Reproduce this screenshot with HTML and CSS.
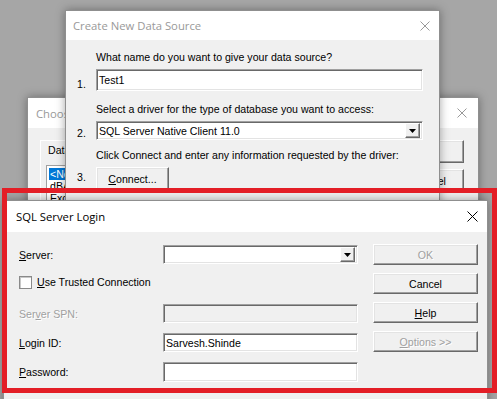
FILE: index.html
```html
<!DOCTYPE html>
<html>
<head>
    <title>SQL Server Login</title>
    <link rel="stylesheet" href="styles.css">
</head>
<body>
    <div class="desktop">

        <!-- Choose Data Source (behind) -->
        <div class="window choose">
            <div class="title-bar inactive">
                <span class="title">Choose Data Source</span>
                <svg class="close-x" width="10" height="10" viewBox="0 0 10 10"><path d="M0.5 0.5L9.5 9.5M9.5 0.5L0.5 9.5" stroke="currentColor" stroke-width="1"/></svg>
            </div>
            <div class="choose-body">
                <div class="tab-frame">
                    <div class="column-head">Data Source Name</div>
                    <div class="list-box">
                        <div class="list-item selected">&lt;New&gt;</div>
                        <div class="list-item">dBASE</div>
                        <div class="list-item">Excel</div>
                    </div>
                </div>
                <div class="button-column">
                    <div class="btn wide">OK</div>
                    <div class="btn wide">Cancel</div>
                </div>
            </div>
        </div>

        <!-- Create New Data Source -->
        <div class="window create">
            <div class="title-bar inactive">
                <span class="title">Create New Data Source</span>
                <svg class="close-x" width="10" height="10" viewBox="0 0 10 10"><path d="M0.5 0.5L9.5 9.5M9.5 0.5L0.5 9.5" stroke="currentColor" stroke-width="1"/></svg>
            </div>
            <div class="create-body">
                <div class="prompt">What name do you want to give your data source?</div>
                <div class="step">1.</div>
                <div class="field tall">Test1</div>

                <div class="prompt">Select a driver for the type of database you want to access:</div>
                <div class="step">2.</div>
                <div class="field combo">
                    <span>SQL Server Native Client 11.0</span>
                    <span class="drop-btn"><svg width="7" height="4" viewBox="0 0 7 4"><path d="M0 0H7L3.5 4Z" fill="#000"/></svg></span>
                </div>

                <div class="prompt">Click Connect and enter any information requested by the driver:</div>
                <div class="step">3.</div>
                <div class="btn connect"><span><u>C</u>onnect...</span></div>
            </div>
        </div>

        <!-- SQL Server Login -->
        <div class="window login">
            <div class="title-bar">
                <span class="title">SQL Server Login</span>
                <svg class="close-x" width="11" height="11" viewBox="0 0 11 11"><path d="M0.5 0.5L10.5 10.5M10.5 0.5L0.5 10.5" stroke="currentColor" stroke-width="1"/></svg>
            </div>
            <div class="login-body">
                <div class="login-form">
                    <div class="form-row">
                        <label><u>S</u>erver:</label>
                        <div class="field combo">
                            <span></span>
                            <span class="drop-btn"><svg width="7" height="4" viewBox="0 0 7 4"><path d="M0 0H7L3.5 4Z" fill="#000"/></svg></span>
                        </div>
                    </div>
                    <div class="check-row">
                        <span class="check-box"></span>
                        <span><u>U</u>se Trusted Connection</span>
                    </div>
                    <div class="form-row spaced">
                        <label class="disabled">Ser<u>v</u>er SPN:</label>
                        <div class="field off"></div>
                    </div>
                    <div class="form-row">
                        <label><u>L</u>ogin ID:</label>
                        <div class="field">Sarvesh.Shinde</div>
                    </div>
                    <div class="form-row">
                        <label><u>P</u>assword:</label>
                        <div class="field pass"></div>
                    </div>
                </div>
                <div class="login-buttons">
                    <div class="btn disabled">OK</div>
                    <div class="btn">Cancel</div>
                    <div class="btn"><span><u>H</u>elp</span></div>
                    <div class="btn disabled"><span><u>O</u>ptions &gt;&gt;</span></div>
                </div>
            </div>
        </div>

        <div class="highlight"></div>
    </div>
</body>
</html>
```

FILE: styles.css
```css
body {
    margin: 0;
    width: 497px;
    height: 399px;
    overflow: hidden;
    background-color: #a6a6a6;
    font-family: 'Liberation Sans', Arial, sans-serif;
    font-size: 10.6px;
    color: #000;
}

.desktop {
    position: relative;
    width: 497px;
    height: 399px;
    overflow: hidden;
}

/* Windows */
.window {
    position: absolute;
    box-sizing: border-box;
    display: flex;
    flex-direction: column;
    background-color: #f0f0f0;
    border: 1px solid #8f8f8f;
    box-shadow: 0 0 9px rgba(0, 0, 0, 0.35);
}

.choose {
    left: 27px;
    top: 97px;
    width: 452px;
    height: 320px;
}

.create {
    left: 65px;
    top: 10px;
    width: 375px;
    height: 210px;
}

.login {
    left: 3px;
    top: 200px;
    width: 485px;
    height: 230px;
}

.title-bar {
    display: flex;
    align-items: center;
    justify-content: space-between;
    flex-shrink: 0;
    background-color: #fff;
    font-family: 'Open Sans', 'Noto Sans', sans-serif;
    font-size: 11.3px;
    color: #000;
}

.title-bar.inactive {
    color: #999;
}

.close-x {
    display: block;
}

.choose .title-bar {
    height: 30px;
    padding: 0 11px 0 8px;
}

.create .title-bar {
    height: 29px;
    padding: 0 9px 0 7px;
}

.login .title-bar {
    height: 31px;
    padding: 0 9px 0 12px;
}

/* Classic controls */
.field {
    box-sizing: border-box;
    display: flex;
    align-items: center;
    height: 19px;
    padding-left: 2px;
    background-color: #fff;
    border-top: 1px solid #a0a0a0;
    border-left: 1px solid #a0a0a0;
    border-right: 1px solid #fff;
    border-bottom: 1px solid #fff;
    box-shadow: inset 1px 1px 0 #696969, inset -1px -1px 0 #e3e3e3;
    white-space: nowrap;
}

.field.tall {
    height: 22px;
}

.field.off {
    background-color: #f0f0f0;
}

.field.pass {
    height: 20px;
}

.combo {
    justify-content: space-between;
    padding-right: 2px;
}

.drop-btn {
    box-sizing: border-box;
    display: flex;
    align-items: center;
    justify-content: center;
    width: 15px;
    height: 15px;
    background-color: #f0f0f0;
    border-top: 1px solid #fff;
    border-left: 1px solid #fff;
    border-right: 1px solid #696969;
    border-bottom: 1px solid #696969;
    box-shadow: inset -1px -1px 0 #a0a0a0;
}

.btn {
    box-sizing: border-box;
    display: flex;
    align-items: center;
    justify-content: center;
    height: 21px;
    background-color: #f0f0f0;
    border-top: 1px solid #fff;
    border-left: 1px solid #fff;
    border-right: 1px solid #696969;
    border-bottom: 1px solid #696969;
    box-shadow: inset -1px -1px 0 #a0a0a0, inset 1px 1px 0 #e3e3e3;
    white-space: nowrap;
}

.btn.disabled,
label.disabled {
    color: #a0a0a0;
    text-shadow: 1px 1px 0 #fff;
}

/* Choose Data Source */
.choose-body {
    display: flex;
    padding: 12px 14px 0 12px;
    gap: 12px;
}

.tab-frame {
    flex: 1;
    height: 200px;
    padding: 3px 0 0 5px;
    border-top: 1px solid #fff;
    border-left: 1px solid #fff;
}

.column-head {
    margin-left: 2px;
    line-height: 13px;
}

.list-box {
    margin-top: 8px;
    height: 120px;
    padding: 2px;
    background-color: #fff;
    border: 1px solid #a0a0a0;
}

.list-item {
    height: 12px;
    line-height: 12px;
    padding-left: 1px;
    white-space: nowrap;
}

.list-item.selected {
    width: 110px;
    background-color: #0078d7;
    color: #fff;
}

.button-column {
    display: flex;
    flex-direction: column;
    gap: 6px;
    width: 69px;
}

.btn.wide {
    height: 23px;
}

/* Create New Data Source */
.create-body {
    display: grid;
    grid-template-columns: 19px 327px;
    align-items: center;
    padding: 11px 0 0 11px;
}

.prompt {
    grid-column: 2;
    line-height: 13px;
    white-space: nowrap;
}

.step {
    grid-column: 1;
}

.create-body .field {
    margin-top: 5px;
}

.create-body .field.tall {
    margin-top: 5px;
    margin-bottom: 12px;
}

.create-body .combo {
    margin-bottom: 9px;
}

.btn.connect {
    margin-top: 5px;
    width: 73px;
    height: 24px;
}

/* SQL Server Login */
.login-body {
    display: flex;
    padding-left: 15px;
}

.login-form {
    width: 339px;
    padding-top: 13px;
}

.form-row {
    display: grid;
    grid-template-columns: 144px 195px;
    align-items: center;
    margin-bottom: 10px;
}

.form-row.spaced {
    margin-top: 14px;
}

.check-row {
    display: flex;
    align-items: center;
    gap: 5px;
    height: 16px;
}

.check-box {
    box-sizing: border-box;
    width: 13px;
    height: 13px;
    background-color: #fff;
    border: 1px solid #8a8a8a;
    box-shadow: inset 1px 1px 0 #c8c8c8;
}

.login-buttons {
    display: flex;
    flex-direction: column;
    gap: 8px;
    width: 105px;
    margin-left: 15px;
    padding-top: 12px;
}

.highlight {
    position: absolute;
    left: 2px;
    top: 188px;
    width: 495px;
    height: 205px;
    box-sizing: border-box;
    border: 5px solid #e31e26;
}
```
